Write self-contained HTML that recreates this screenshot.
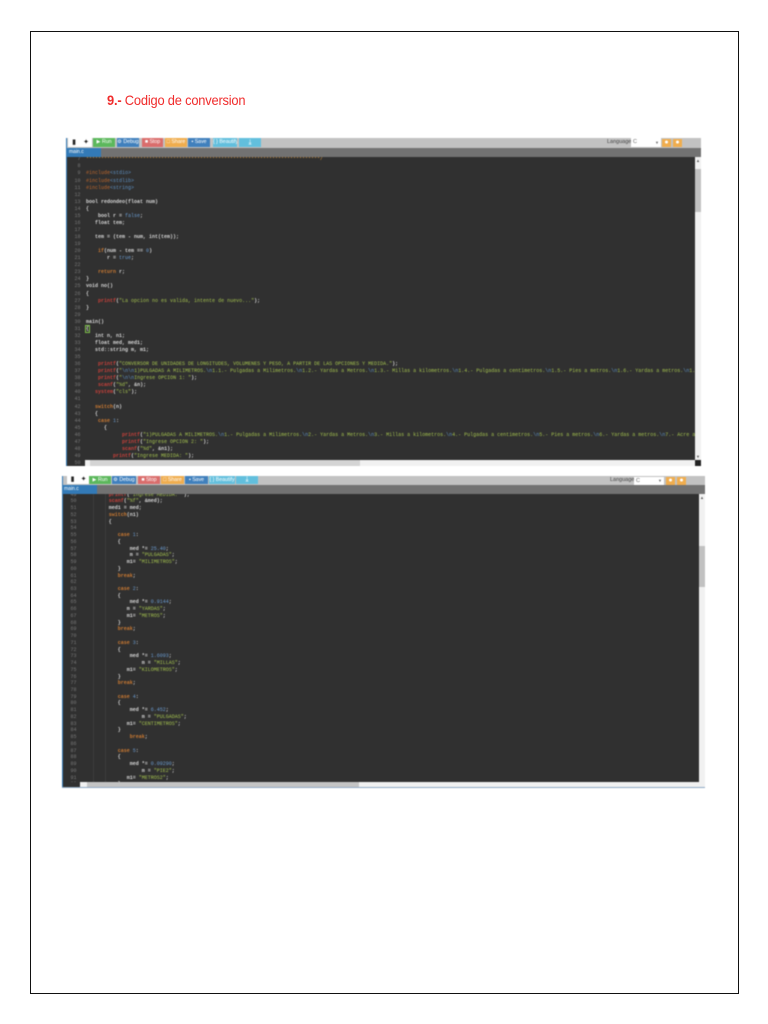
<!DOCTYPE html>
<html lang="es">
<head>
<meta charset="utf-8">
<title>9.- Codigo de conversion</title>
<style>
html,body{margin:0;padding:0;background:#fff}
body{position:relative;width:768px;height:1024px;overflow:hidden;font-family:"Liberation Sans",sans-serif}
.frame{position:absolute;left:30px;top:31px;width:707px;height:961px;border:1px solid #111}
h1{position:absolute;left:107px;top:91px;margin:0;font-size:14px;line-height:18px;font-weight:400;color:#f02c2c;white-space:nowrap;font-family:"Liberation Sans",sans-serif;letter-spacing:-.22px;transform:scaleX(.92);transform-origin:0 0}
h1 b{font-weight:700}
.wrap{position:absolute;left:0;top:0;width:768px;height:1024px;filter:blur(.45px)}
.a{position:absolute;overflow:hidden}
.btn{position:absolute;color:#fff;font-size:5.2px;line-height:9px;text-align:center;white-space:nowrap;overflow:hidden}
.g{background:#5cb85c}.b{background:#4080bd}.r{background:#da6d6c}.o{background:#f0ad4e}.c{background:#62bfdd}.w{background:#fff;color:#222;font-size:7px}
.t{font-size:7px}
pre{position:absolute;margin:0;font-family:"Liberation Mono",monospace;font-size:5px;color:#d6d6d6;font-weight:700;white-space:pre}
.num{color:#777;font-weight:400;text-align:right}
.k{color:#cc7a32}.f{color:#c9403a}.s{color:#a3c14e;font-weight:400}.e{color:#5d8fc0;font-weight:400}.n{color:#6a9bd0;font-weight:400}.p{color:#c0682c;font-weight:400}.i{color:#5d8fc0;font-weight:400}.cm{color:#b98238;font-weight:700}
.hl{outline:.5px solid #7fc24a}
.lang{color:#444;font-size:5.5px;line-height:9px;white-space:nowrap}
.sel{background:#fff;color:#666;font-size:5.5px;line-height:9px;padding-left:2px;box-sizing:border-box}
.arw{position:absolute;color:#555;font-size:4px;line-height:5px;text-align:center}
.guide{position:absolute;width:1px;background:#3c3c3c}
</style>
</head>
<body>
<div class="frame"></div>
<h1><b>9.-</b> Codigo de conversion</h1>
<div class="wrap">

<!-- Screenshot 1 -->
<div class="a" style="left:66px;top:138px;width:635px;height:10px;background:#c2c2c2"></div>
<div class="a" style="left:66px;top:148px;width:635px;height:9px;background:#727272"></div>
<div class="a" style="left:66px;top:157px;width:635px;height:309px;background:#303030"></div>
<div class="a" style="left:66px;top:138px;width:1px;height:328px;background:#337ab7"></div>
<div class="a" style="left:67px;top:148px;width:34px;height:9px;background:#337ab7;color:#fff;font-size:5px;line-height:9px;padding-left:2px;box-sizing:border-box">main.c</div>

<div class="btn w" style="left:68px;top:138px;width:12px;height:9px">&#9646;</div>
<div class="btn w" style="left:80px;top:138px;width:12px;height:9px">&#10022;</div>
<div class="btn g" style="left:93px;top:138px;width:22px;height:9px">&#9654; Run</div>
<div class="btn b" style="left:117px;top:138px;width:22px;height:9px">&#9881; Debug</div>
<div class="btn r" style="left:142px;top:138px;width:21px;height:9px">&#9632; Stop</div>
<div class="btn o" style="left:165px;top:138px;width:22px;height:9px">&#9633; Share</div>
<div class="btn b" style="left:188px;top:138px;width:22px;height:9px">&#9642; Save</div>
<div class="btn c" style="left:213px;top:138px;width:24px;height:9px">{ } Beautify</div>
<div class="btn c" style="left:239px;top:138px;width:22px;height:9px;font-size:7px">&#10515;</div>

<div class="a lang" style="left:607px;top:138px;width:24px;height:9px">Language</div>
<div class="a sel" style="left:631px;top:138px;width:30px;height:9px">C<span style="position:absolute;right:2px;top:0;font-size:4px">&#9660;</span></div>
<div class="btn o t" style="left:662px;top:139px;width:9px;height:8px;line-height:8px">&#9679;</div>
<div class="btn o t" style="left:673px;top:139px;width:9px;height:8px;line-height:8px">&#9679;</div>

<div class="a" style="left:67px;top:157px;width:628px;height:309px">
<pre class="num" style="left:0;top:-.7px;width:13.5px;line-height:7.07px">7
8
9
10
11
12
13
14
15
16
17
18
19
20
21
22
23
24
25
26
27
28
29
30
31
32
33
34
35
36
37
38
39
40
41
42
43
44
45
46
47
48
49
50</pre>
<pre style="left:19px;top:-.7px;line-height:7.07px"><span class="cm">******************************************************************************/</span>

<span class="p">#include</span><span class="i">&lt;stdio&gt;</span>
<span class="p">#include</span><span class="i">&lt;stdlib&gt;</span>
<span class="p">#include</span><span class="i">&lt;string&gt;</span>

bool redondeo(float num)
{
    bool r = <span class="n">false</span>;
   float tem;

   tem = (tem - num, int(tem));

    <span class="k">if</span>(num - tem == <span class="n">0</span>)
       r = <span class="n">true</span>;

    <span class="k">return</span> r;
}
void no()
{
    <span class="f">printf</span>(<span class="s">"La opcion no es valida, intente de nuevo..."</span>);
}

main()
<span class="hl">{</span>
   int n, n1;
   float med, med1;
   std::string m, m1;

    <span class="f">printf</span>(<span class="s">"CONVERSOR DE UNIDADES DE LONGITUDES, VOLUMENES Y PESO, A PARTIR DE LAS OPCIONES Y MEDIDA."</span>);
    <span class="f">printf</span>(<span class="s">"</span><span class="e">\n\n</span><span class="s">1)PULGADAS A MILIMETROS.</span><span class="e">\n</span><span class="s">1.1.- Pulgadas a Milimetros.</span><span class="e">\n</span><span class="s">1.2.- Yardas a Metros.</span><span class="e">\n</span><span class="s">1.3.- Millas a kilometros.</span><span class="e">\n</span><span class="s">1.4.- Pulgadas a centimetros.</span><span class="e">\n</span><span class="s">1.5.- Pies a metros.</span><span class="e">\n</span><span class="s">1.6.- Yardas a metros.</span><span class="e">\n</span><span class="s">1.7</span>
    <span class="f">printf</span>(<span class="s">"</span><span class="e">\n\n</span><span class="s">Ingrese OPCION 1: "</span>);
    <span class="f">scanf</span>(<span class="s">"%d"</span>, &amp;n);
   <span class="f">system</span>(<span class="s">"cls"</span>);

   <span class="k">switch</span>(n)
   {
    <span class="k">case</span> <span class="n">1</span>:
      {
            <span class="f">printf</span>(<span class="s">"1)PULGADAS A MILIMETROS.</span><span class="e">\n</span><span class="s">1.- Pulgadas a Milimetros.</span><span class="e">\n</span><span class="s">2.- Yardas a Metros.</span><span class="e">\n</span><span class="s">3.- Millas a kilometros.</span><span class="e">\n</span><span class="s">4.- Pulgadas a centimetros.</span><span class="e">\n</span><span class="s">5.- Pies a metros.</span><span class="e">\n</span><span class="s">6.- Yardas a metros.</span><span class="e">\n</span><span class="s">7.- Acre a h</span>
            <span class="f">printf</span>(<span class="s">"Ingrese OPCION 2: "</span>);
            <span class="f">scanf</span>(<span class="s">"%d"</span>, &amp;n1);
         <span class="f">printf</span>(<span class="s">"Ingrese MEDIDA: "</span>);</pre>
</div>
<div class="a" style="left:695px;top:157px;width:6px;height:309px;background:#f1f1f1"></div>
<div class="a" style="left:695px;top:169px;width:6px;height:43px;background:#c1c1c1"></div>
<div class="arw" style="left:695px;top:158px;width:6px">&#9650;</div>
<div class="arw" style="left:695px;top:454px;width:6px">&#9660;</div>
<div class="a" style="left:85px;top:460px;width:610px;height:6px;background:#f1f1f1"></div>
<div class="a" style="left:90px;top:460px;width:270px;height:6px;background:#d4d4d4"></div>
<div class="a" style="left:695px;top:460px;width:6px;height:6px;background:#222"></div>

<!-- Screenshot 2 -->
<div class="a" style="left:62px;top:476px;width:643px;height:9px;background:#c2c2c2"></div>
<div class="a" style="left:62px;top:485px;width:643px;height:9px;background:#727272"></div>
<div class="a" style="left:62px;top:494px;width:643px;height:294px;background:#303030"></div>
<div class="a" style="left:62px;top:476px;width:1px;height:312px;background:#337ab7"></div>
<div class="a" style="left:62px;top:485px;width:35px;height:9px;background:#337ab7;color:#fff;font-size:5px;line-height:9px;padding-left:2px;box-sizing:border-box">main.c</div>

<div class="btn w" style="left:67px;top:476px;width:11px;height:8px;line-height:8px">&#9646;</div>
<div class="btn w" style="left:78px;top:476px;width:11px;height:8px;line-height:8px">&#10022;</div>
<div class="btn g" style="left:89px;top:476px;width:22px;height:8px;line-height:8px">&#9654; Run</div>
<div class="btn b" style="left:112px;top:476px;width:24px;height:8px;line-height:8px">&#9881; Debug</div>
<div class="btn r" style="left:138px;top:476px;width:22px;height:8px;line-height:8px">&#9632; Stop</div>
<div class="btn o" style="left:161px;top:476px;width:23px;height:8px;line-height:8px">&#9633; Share</div>
<div class="btn b" style="left:185px;top:476px;width:23px;height:8px;line-height:8px">&#9642; Save</div>
<div class="btn c" style="left:209px;top:476px;width:26px;height:8px;line-height:8px">{ } Beautify</div>
<div class="btn c" style="left:236px;top:476px;width:22px;height:8px;line-height:8px;font-size:7px">&#10515;</div>

<div class="a lang" style="left:610px;top:476px;width:24px;height:9px">Language</div>
<div class="a sel" style="left:634px;top:477px;width:30px;height:8px;line-height:8px">C<span style="position:absolute;right:2px;top:0;font-size:4px">&#9660;</span></div>
<div class="btn o t" style="left:666px;top:477px;width:9px;height:8px;line-height:8px">&#9679;</div>
<div class="btn o t" style="left:677px;top:477px;width:9px;height:8px;line-height:8px">&#9679;</div>

<div class="guide" style="left:93px;top:494px;height:288px"></div>
<div class="guide" style="left:105px;top:494px;height:288px"></div>
<div class="a" style="left:63px;top:494px;width:636px;height:288px">
<pre class="num" style="left:0;top:-2.3px;width:13.5px;line-height:6.74px">49
50
51
52
53
54
55
56
57
58
59
60
61
62
63
64
65
66
67
68
69
70
71
72
73
74
75
76
77
78
79
80
81
82
83
84
85
86
87
88
89
90
91
92</pre>
<pre style="left:18.7px;top:-2.3px;line-height:6.74px">         <span class="f">printf</span>(<span class="s">"Ingrese MEDIDA: "</span>);
         <span class="f">scanf</span>(<span class="s">"%f"</span>, &amp;med);
         med1 = med;
         <span class="k">switch</span>(n1)
         {

            <span class="k">case</span> <span class="n">1</span>:
            {
                med *= <span class="n">25.40</span>;
                m = <span class="s">"PULGADAS"</span>;
               m1= <span class="s">"MILIMETROS"</span>;
            }
            <span class="k">break</span>;

            <span class="k">case</span> <span class="n">2</span>:
            {
                med *= <span class="n">0.9144</span>;
               m = <span class="s">"YARDAS"</span>;
               m1= <span class="s">"METROS"</span>;
            }
            <span class="k">break</span>;

            <span class="k">case</span> <span class="n">3</span>:
            {
                med *= <span class="n">1.6093</span>;
                    m = <span class="s">"MILLAS"</span>;
               m1= <span class="s">"KILOMETROS"</span>;
            }
            <span class="k">break</span>;

            <span class="k">case</span> <span class="n">4</span>:
            {
                med *= <span class="n">6.452</span>;
                    m = <span class="s">"PULGADAS"</span>;
               m1= <span class="s">"CENTIMETROS"</span>;
            }
                <span class="k">break</span>;

            <span class="k">case</span> <span class="n">5</span>:
            {
                med *= <span class="n">0.09290</span>;
                    m = <span class="s">"PIE2"</span>;
               m1= <span class="s">"METROS2"</span>;
            }</pre>
</div>
<div class="a" style="left:699px;top:494px;width:6px;height:294px;background:#f1f1f1"></div>
<div class="a" style="left:699px;top:546px;width:6px;height:41px;background:#c1c1c1"></div>
<div class="arw" style="left:699px;top:495px;width:6px">&#9650;</div>
<div class="a" style="left:80px;top:782px;width:619px;height:5px;background:#f1f1f1"></div>
<div class="a" style="left:87px;top:782px;width:272px;height:5px;background:#c4c4c4"></div>
<div class="a" style="left:62px;top:787px;width:643px;height:1px;background:#8fa9c4"></div>

</div>
</body>
</html>
